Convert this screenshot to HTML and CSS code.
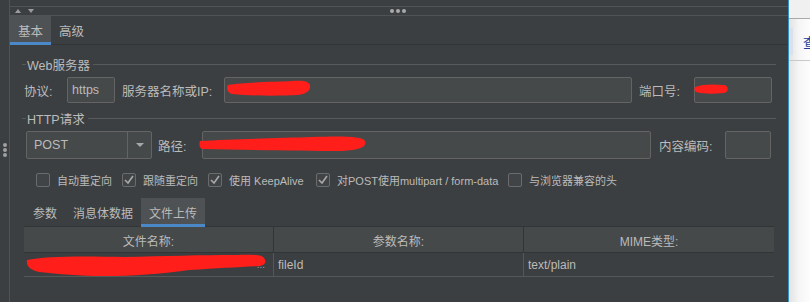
FILE: index.html
```html
<!DOCTYPE html>
<html lang="zh-CN">
<head>
    <meta charset="UTF-8">
    <title>HTTP请求</title>
    <link rel="stylesheet" href="styles.css">
</head>
<body>
<div class="window">
    <div class="side">
        <span class="grip"><i></i><i></i><i></i></span>
    </div>

    <div class="main">
        <div class="strip"></div>
        <div class="toolbar">
            <span class="arrows"><i class="up"></i><i class="down"></i></span>
            <span class="dots"><i></i><i></i><i></i></span>
        </div>

        <div class="tabs top-tabs">
            <div class="tab active">基本</div>
            <div class="tab">高级</div>
        </div>

        <div class="content">
            <div class="group-title"><span>Web服务器</span></div>
            <div class="row server-row">
                <span class="label w-protocol">协议:</span>
                <div class="field w-https">https</div>
                <span class="label w-server">服务器名称或IP:</span>
                <div class="field w-host">
                    <svg class="redact" width="90" height="24">
                        <path d="M4 8 C20 5 50 5 68 4 C78 3 85 4 86 8 C87 13 83 17 74 18 C55 19 30 19 8 17 C3 16 2 10 4 8 Z"/>
                    </svg>
                </div>
                <span class="label w-port-label">端口号:</span>
                <div class="field w-port">
                    <svg class="redact" width="40" height="24">
                        <path d="M1 10 C8 7 20 7 30 8 C35 9 35 15 30 16 C20 17 8 17 2 15 C0 13 0 11 1 10 Z"/>
                    </svg>
                </div>
            </div>

            <div class="group-title http"><span>HTTP请求</span></div>
            <div class="row request-row">
                <div class="combo">
                    <span class="combo-value">POST</span>
                    <span class="combo-arrow"><i></i></span>
                </div>
                <span class="label w-path-label">路径:</span>
                <div class="field w-path">
                    <svg class="redact" width="170" height="26">
                        <path d="M-2 10 C30 8 80 7 110 6 C140 5 160 5 163 10 C165 16 158 19 140 20 C100 20 50 19 0 18 C-3 17 -3 12 -2 10 Z"/>
                    </svg>
                </div>
                <span class="label w-enc-label">内容编码:</span>
                <div class="field w-enc"></div>
            </div>

            <div class="checks">
                <label class="check w-c1"><span class="box"></span>自动重定向</label>
                <label class="check w-c2"><span class="box checked"><svg width="12" height="12"><path d="M2 6 L5 9 L10 2"/></svg></span>跟随重定向</label>
                <label class="check w-c3"><span class="box checked"><svg width="12" height="12"><path d="M2 6 L5 9 L10 2"/></svg></span>使用 KeepAlive</label>
                <label class="check w-c4"><span class="box checked"><svg width="12" height="12"><path d="M2 6 L5 9 L10 2"/></svg></span>对POST使用multipart / form-data</label>
                <label class="check"><span class="box"></span>与浏览器兼容的头</label>
            </div>

            <div class="tabs sub-tabs">
                <div class="tab">参数</div>
                <div class="tab">消息体数据</div>
                <div class="tab active">文件上传</div>
            </div>

            <div class="table">
                <div class="thead">
                    <span>文件名称:</span>
                    <span>参数名称:</span>
                    <span>MIME类型:</span>
                </div>
                <div class="trow">
                    <span>
                        <em class="tail">...</em>
                        <svg class="redact" width="250" height="24">
                            <path d="M3 7 C20 3 60 3 100 4 C140 3 180 2 210 2 C230 1 238 2 240 5 C243 9 241 12 236 13 C215 14 195 15 165 17 C135 21 110 23 80 23 C55 23 35 21 15 19 C6 17 2 13 3 7 Z"/>
                        </svg>
                    </span>
                    <span>fileId</span>
                    <span>text/plain</span>
                </div>
            </div>
        </div>
    </div>

    <div class="neighbour">
        <div class="n-top"></div>
        <div class="n-button">查</div>
        <div class="n-line"></div>
    </div>
</div>
</body>
</html>
```

FILE: styles.css
```css
* {
    box-sizing: border-box;
}

body {
    margin: 0;
    width: 810px;
    height: 302px;
    overflow: hidden;
    font-family: "Liberation Sans", "Noto Sans CJK SC", sans-serif;
    color: #bbbbbb;
    background: #3c3f41;
}

.window {
    display: flex;
    height: 302px;
}

/* left splitter strip */
.side {
    width: 10px;
    border-right: 1px solid #515457;
    display: flex;
    align-items: center;
}

.grip {
    display: flex;
    flex-direction: column;
    gap: 1px;
    margin: 0 0 2px 3px;
}

.grip i {
    width: 4px;
    height: 4px;
    border-radius: 50%;
    background: #a0a0a0;
}

.main {
    flex: 1;
    min-width: 0;
    display: flex;
    flex-direction: column;
}

.strip {
    height: 7px;
    border-bottom: 1px solid #515457;
}

.toolbar {
    height: 9px;
    border-bottom: 1px solid #515457;
    display: grid;
    grid-template-columns: 1fr auto 1fr;
    align-items: center;
}

.arrows {
    display: flex;
    align-items: center;
    gap: 7px;
    padding-left: 5px;
}

.arrows .up {
    width: 0;
    border-left: 3px solid transparent;
    border-right: 3px solid transparent;
    border-bottom: 4px solid #9b9b9b;
}

.arrows .down {
    width: 0;
    border-left: 3px solid transparent;
    border-right: 3px solid transparent;
    border-top: 4px solid #9b9b9b;
}

.dots {
    display: flex;
    gap: 2px;
    margin-left: -3px;
}

.dots i {
    width: 4px;
    height: 4px;
    border-radius: 50%;
    background: #a9a9a9;
}

/* tabs */
.tabs {
    display: flex;
    box-shadow: inset 0 -1px 0 #323436;
}

.tab {
    padding: 0 8px;
    display: flex;
    align-items: center;
    white-space: nowrap;
}

.tab.active {
    background: #4e5254;
    box-shadow: inset 0 -3px 0 #4a88c7;
}

.top-tabs {
    height: 29px;
    font-size: 12.5px;
}

.sub-tabs {
    margin: 11px 0 0 3px;
    height: 28px;
    font-size: 12px;
    box-shadow: none;
}

.sub-tabs .tab.active {
    position: relative;
    height: 29px;
    margin-bottom: -1px;
}

.content {
    padding: 0 12px;
}

.group-title {
    display: flex;
    align-items: center;
    height: 14px;
    margin-top: 12px;
    font-size: 12.5px;
}

.group-title::before {
    content: "";
    width: 4px;
    height: 1px;
    margin-right: 1px;
    background: #57595b;
}

.group-title::after {
    content: "";
    flex: 1;
    height: 1px;
    margin-left: 3px;
    background: #57595b;
}

.group-title.http {
    margin-top: 8px;
}

.row {
    display: flex;
    align-items: center;
}

.server-row {
    margin-top: 6px;
    padding-left: 2px;
    height: 26px;
}

.request-row {
    margin-top: 6px;
    padding-left: 4px;
    height: 28px;
}

.label {
    font-size: 12.5px;
    white-space: nowrap;
}

.field {
    position: relative;
    height: 100%;
    display: flex;
    align-items: center;
    padding-left: 4px;
    background: #45494a;
    border: 1px solid #646464;
    border-radius: 2px;
    font-size: 12.5px;
}

.w-protocol { width: 43px; }
.w-https { width: 48px; }
.w-server { width: 102px; margin-left: 7px; }
.w-host { width: 408px; }
.w-port-label { width: 55px; margin-left: 7px; }
.w-port { width: 78px; }
.w-path-label { width: 44px; margin-left: 6px; }
.w-path { width: 449px; }
.w-enc-label { width: 66px; margin-left: 8px; }
.w-enc { width: 46px; }

.redact {
    position: absolute;
    left: 0;
    top: 0;
    overflow: visible;
}

.field .redact {
    left: -1px;
    top: -1px;
}

.redact path {
    fill: #ff1e19;
}

.combo {
    width: 126px;
    height: 100%;
    display: flex;
    background: #45494a;
    border: 1px solid #646464;
    border-radius: 2px;
    font-size: 12.5px;
}

.combo-value {
    flex: 1;
    display: flex;
    align-items: center;
    padding-left: 7px;
}

.combo-arrow {
    width: 24px;
    border-left: 1px solid #646464;
    display: flex;
    align-items: center;
    justify-content: center;
}

.combo-arrow i {
    width: 0;
    border-left: 4px solid transparent;
    border-right: 4px solid transparent;
    border-top: 4px solid #a8a8a8;
}

/* checkboxes */
.checks {
    display: flex;
    height: 14px;
    margin: 14px 0 0 14px;
    font-size: 11px;
}

.check {
    display: flex;
    align-items: center;
    gap: 7px;
    white-space: nowrap;
}

.w-c1 { width: 86px; }
.w-c2 { width: 86px; }
.w-c3 { width: 108px; }
.w-c4 { width: 192px; }

.box {
    width: 14px;
    height: 14px;
    flex: none;
    display: flex;
    align-items: center;
    justify-content: center;
    background: #404446;
    border: 1px solid #6b6b6b;
    border-radius: 2px;
}

.box path {
    fill: none;
    stroke: #a9a9a9;
    stroke-width: 1.6;
}

/* file upload table */
.table {
    width: 750px;
    margin-left: 2px;
    border-top: 1px solid #323436;
    font-size: 12px;
}

.thead,
.trow {
    display: grid;
    grid-template-columns: 250px 250px 250px;
}

.thead {
    height: 26px;
    background: #45494a;
    border-bottom: 1px solid #323436;
}

.thead span {
    display: flex;
    align-items: center;
    justify-content: center;
    padding-top: 2px;
    border-right: 1px solid #323436;
}

.trow {
    height: 24px;
    border-bottom: 1px solid #555759;
}

.trow span {
    position: relative;
    display: flex;
    align-items: center;
    padding-left: 4px;
    border-right: 1px solid #555759;
}

.trow .tail {
    margin-left: auto;
    margin-right: 8px;
    font-style: normal;
    font-size: 10px;
    color: #9a9a9a;
}

.thead span:last-child,
.trow span:last-child {
    border-right: none;
}

/* neighbouring window on the right */
.neighbour {
    width: 22px;
    display: flex;
    flex-direction: column;
    border-left: 1px solid #3592c4;
    background: linear-gradient(to right, #e2e2e2, #f5f5f5 45%, #fdfdfd);
    overflow: hidden;
}

.n-top {
    height: 19px;
    background: #f0f0f0;
    border-bottom: 1px solid #a9a9a9;
}

.n-button {
    height: 27px;
    margin-top: 9px;
    padding-left: 14px;
    display: flex;
    align-items: center;
    color: #1d3c9e;
    font-size: 13px;
    white-space: nowrap;
    background: linear-gradient(to right, #d9e2ec 4px, transparent 4px);
}

.n-line {
    margin-top: 5px;
    border-top: 1px solid #c9c9c9;
}
```
